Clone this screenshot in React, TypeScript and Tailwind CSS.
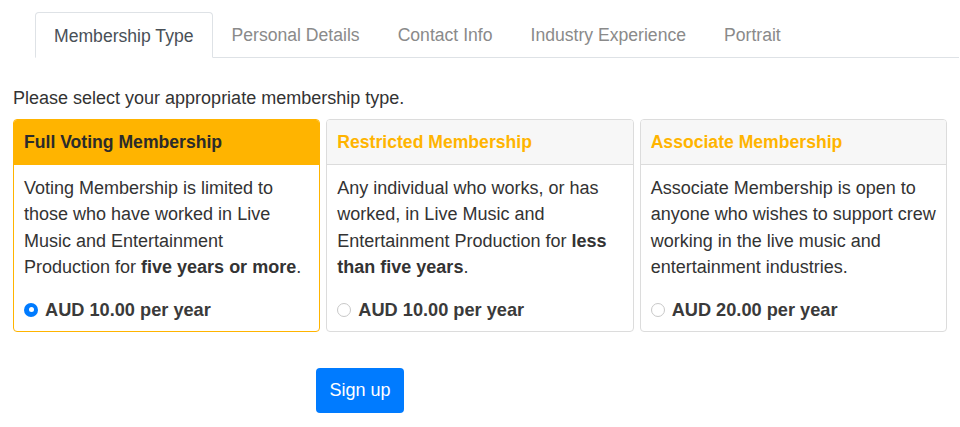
import { useState } from 'react'

const tabs = [
  'Membership Type',
  'Personal Details',
  'Contact Info',
  'Industry Experience',
  'Portrait',
]

type Plan = {
  id: string
  title: string
  price: string
  body: React.ReactNode
}

const plans: Plan[] = [
  {
    id: 'full',
    title: 'Full Voting Membership',
    price: 'AUD 10.00 per year',
    body: (
      <>
        Voting Membership is limited to those who have worked in Live Music and
        Entertainment Production for <b>five years or more</b>.
      </>
    ),
  },
  {
    id: 'restricted',
    title: 'Restricted Membership',
    price: 'AUD 10.00 per year',
    body: (
      <>
        Any individual who works, or has worked, in Live Music and
        Entertainment Production for <b>less than five years</b>.
      </>
    ),
  },
  {
    id: 'associate',
    title: 'Associate Membership',
    price: 'AUD 20.00 per year',
    body: (
      <>
        Associate Membership is open to anyone who wishes to support crew
        working in the live music and entertainment industries.
      </>
    ),
  },
]

function Radio({ checked }: { checked: boolean }) {
  return checked ? (
    <span className="flex h-[14px] w-[14px] shrink-0 items-center justify-center rounded-full bg-[#007bff]">
      <span className="h-[5px] w-[5px] rounded-full bg-white" />
    </span>
  ) : (
    <span className="h-[14px] w-[14px] shrink-0 rounded-full border border-[#c8c8c8] bg-white" />
  )
}

export default function App() {
  const [selected, setSelected] = useState('full')

  return (
    <div className="min-h-[427px] bg-white pt-3 font-['Liberation_Sans',Arial,sans-serif] text-[18px] leading-[26.5px] text-[#333]">
      {/* Tabs */}
      <ul className="ml-[35px] mr-px flex border-b border-[#dee2e6] text-[17.6px]">
        {tabs.map((t, i) => (
          <li
            key={t}
            className={
              i === 0
                ? '-mb-px flex h-[46px] items-center rounded-t-[4px] border border-[#dee2e6] border-b-white bg-white px-[18px] pt-[2px] text-[#495057]'
                : 'flex h-[45px] items-center px-[19px] pt-[2px] text-[#8a8a8a]'
            }
          >
            {t}
          </li>
        ))}
      </ul>

      <div className="px-[13px]">
        <p className="mt-[27px]">Please select your appropriate membership type.</p>

        {/* Plans */}
        <div className="mt-[7px] grid grid-cols-3 gap-[6px]">
          {plans.map((p) => {
            const active = selected === p.id
            return (
              <div
                key={p.id}
                onClick={() => setSelected(p.id)}
                className={
                  active
                    ? 'flex cursor-pointer flex-col rounded-[4px] border border-[#ffb400]'
                    : 'flex cursor-pointer flex-col rounded-[4px] border border-[#dcdcdc]'
                }
              >
                <div
                  className={
                    active
                      ? 'flex h-[45px] items-center rounded-t-[3px] border-b border-[#ffb400] bg-[#ffb400] px-[10px] pt-[2px] text-[17.6px] font-bold text-[#2b2b2b]'
                      : 'flex h-[45px] items-center rounded-t-[3px] border-b border-[#dcdcdc] bg-[#f7f7f7] px-[10px] pt-[2px] text-[17.6px] font-bold text-[#ffb400]'
                  }
                >
                  {p.title}
                </div>
                <div className="flex flex-1 flex-col pb-[8px] pl-[10px] pr-[6px] pt-[10px]">
                  <p>{p.body}</p>
                  <label className="mt-[16px] flex cursor-pointer items-center gap-[7px] text-[18.2px] font-bold text-[#3a3a3a]">
                    <Radio checked={active} />
                    {p.price}
                  </label>
                </div>
              </div>
            )
          })}
        </div>

        <button className="ml-[303px] mt-[36px] h-[45px] w-[88px] rounded-[4px] bg-[#007bff] text-[18px] text-white">
          Sign up
        </button>
      </div>
    </div>
  )
}
